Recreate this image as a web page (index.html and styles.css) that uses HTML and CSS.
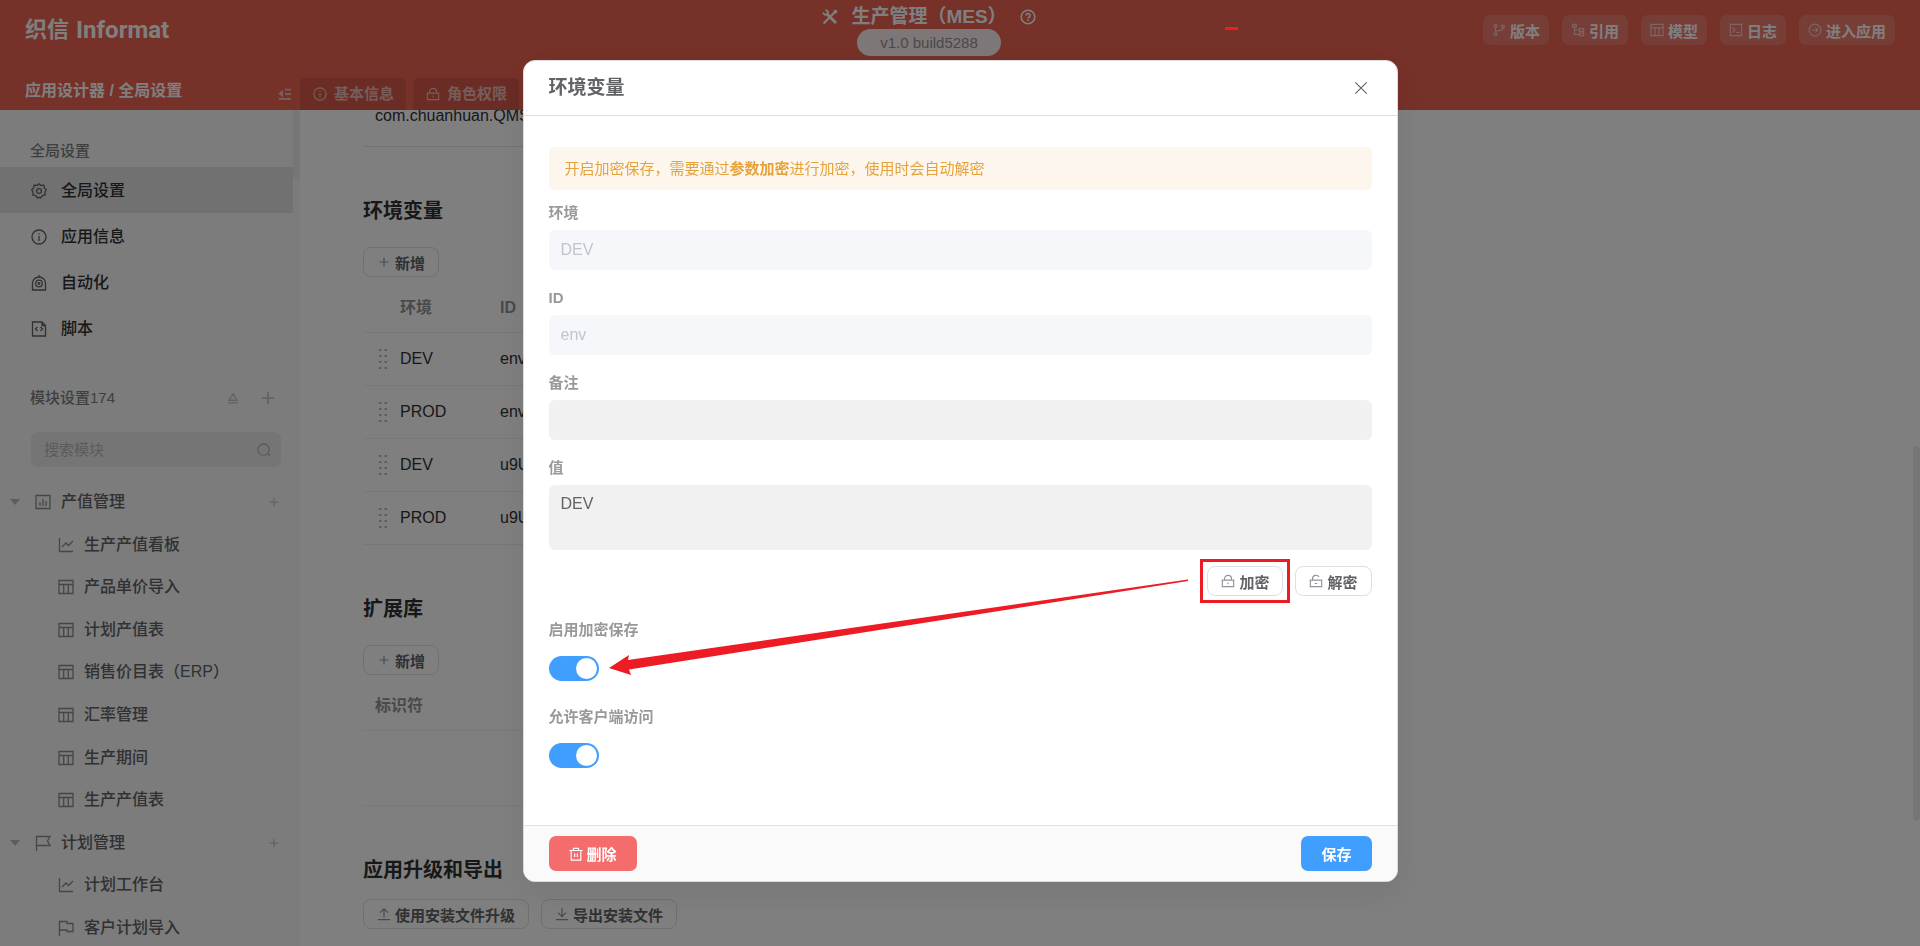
FILE: index.html
```html
<!DOCTYPE html>
<html lang="zh-CN">
<head>
  <meta charset="UTF-8">
  <meta name="viewport" content="width=device-width, initial-scale=1.0">
  <title>应用设计器</title>
  <link rel="stylesheet" href="styles.css">
</head>
<body>
  <!-- Icon set -->
  <svg class="icon-defs" aria-hidden="true">
    <symbol id="i-tools" viewBox="0 0 16 16"><path d="M4.500 4.500L14 14" stroke-width="2.800"/><path d="M11 5l-9.500 9.500M12 1.500l2.500 2.500M14.800 1.200L10.500 5.500" stroke-width="2.200"/><path d="M.8 3.500L3 5.800l2.600-.4L6 2.800 3.800.6" stroke-width="1.800"/></symbol>
    <symbol id="i-help" viewBox="0 0 16 16"><circle cx="8" cy="8" r="6.800" stroke-width="1.600"/><path d="M6 6.500a2 2 0 1 1 2.800 1.900c-.6.300-.8.600-.8 1.200" stroke-width="1.600"/><path d="M8 10.600v1.400" stroke-width="1.600"/></symbol>
    <symbol id="i-branch" viewBox="0 0 16 16"><circle cx="4" cy="3.500" r="1.600"/><circle cx="4" cy="12.500" r="1.600"/><circle cx="12.500" cy="4" r="1.600"/><path d="M4 5.200v5.600M12.500 5.700c0 3-3 3.300-8.500 3.300"/></symbol>
    <symbol id="i-tree" viewBox="0 0 16 16"><path d="M2 1.500h4v3H2zM9.500 6.500h5v3h-5zM9.500 11.500h5v3h-5zM4 4.500V13h5.500M4 8h5.500"/></symbol>
    <symbol id="i-table" viewBox="0 0 16 16"><path d="M1 1.500h14v13H1zM1 5.500h14M5.700 5.500v9M10.300 5.500v9"/></symbol>
    <symbol id="i-console" viewBox="0 0 16 16"><path d="M1.500 1.500h13v13h-13zM4 5l3 3-3 3M8.500 11h3.500"/></symbol>
    <symbol id="i-enter" viewBox="0 0 16 16"><circle cx="8" cy="8" r="6.700"/><path d="M4.500 8h6.500M8.500 5.300L11.200 8l-2.700 2.700"/></symbol>
    <symbol id="i-fold" viewBox="0 0 16 16"><path d="M8 3h7M8 8h7M1 13.500h14" stroke-width="2"/><path d="M5 4.500L1.500 7.500 5 10.500z" fill="currentColor"/></symbol>
    <symbol id="i-info" viewBox="0 0 16 16"><circle cx="8" cy="8" r="7"/><path d="M8 7v5M8 4.200v1.400"/></symbol>
    <symbol id="i-lock" viewBox="0 0 16 16"><path d="M1.500 7h13v7.500h-13zM4 7V5.500a4 4 0 0 1 8 0V7M8 9.800v2"/></symbol>
    <symbol id="i-unlock" viewBox="0 0 16 16"><path d="M1.500 7h13v7.500h-13zM4 7V5.500a4 4 0 0 1 7.500-2M6.500 10.800h3"/></symbol>
    <symbol id="i-gear" viewBox="0 0 16 16"><path d="M8 .8l2 1.700 2.800-.3.500 2.700 2 1.900L14 9.200l.1 2.800-2.700.5L9.600 15 8 14.300 6.400 15l-1.800-2.500-2.700-.5L2 9.200.7 6.800l2-1.900.5-2.700 2.800.3z"/><circle cx="8" cy="8" r="2.400"/></symbol>
    <symbol id="i-robot" viewBox="0 0 16 16"><path d="M1.500 15V8a6.500 6 0 0 1 13 0v7zM8 2V0"/><circle cx="8" cy="8.500" r="3.300"/><circle cx="8" cy="8.500" r=".8"/></symbol>
    <symbol id="i-script" viewBox="0 0 16 16"><path d="M1.500 1H11l3.500 3.500V15h-13zM11 1v3.500h3.500M6.500 6L4.500 8l2 2M9.500 6l2 2-2 2"/></symbol>
    <symbol id="i-collapse" viewBox="0 0 16 16"><path d="M8 2.500L13.500 11h-11zM1.500 14.500h13" stroke-width="1.800"/></symbol>
    <symbol id="i-plus" viewBox="0 0 16 16"><path d="M8 1v14M1 8h14" stroke-width="2"/></symbol>
    <symbol id="i-add" viewBox="0 0 16 16"><path d="M8 3v10M3 8h10"/></symbol>
    <symbol id="i-search" viewBox="0 0 16 16"><circle cx="7.500" cy="7.500" r="6.500"/><path d="M12 12l3 3"/></symbol>
    <symbol id="i-bars" viewBox="0 0 16 16"><path d="M1 1.500h14v13H1zM5 8v4M8 5v7M11 7v5"/></symbol>
    <symbol id="i-line" viewBox="0 0 16 16"><path d="M1.500 1v13.500H15M4 10l4-4 2.500 2.500L15 4"/></symbol>
    <symbol id="i-flag" viewBox="0 0 16 16"><path d="M1.500 16V1.500h13.500L12.500 6l2.500 4.500H1.500"/></symbol>
    <symbol id="i-flag2" viewBox="0 0 16 16"><path d="M1.500 16V1.500h7.500v2h6v8H9v-1.500H1.500"/></symbol>
    <symbol id="i-upload" viewBox="0 0 16 16"><path d="M8 12V2M3.500 6.500L8 2l4.500 4.500M1 14.500h14"/></symbol>
    <symbol id="i-download" viewBox="0 0 16 16"><path d="M8 1v10M3.500 6.500L8 11l4.500-4.500M1 14.500h14"/></symbol>
    <symbol id="i-trash" viewBox="0 0 16 16"><path d="M.5 4h15M2.500 4v11h11V4M5 4V1.500h6V4M6.500 7.500v4M9.500 7.500v4"/></symbol>
    <symbol id="i-close" viewBox="0 0 16 16"><path d="M1.500 1.500l13 13M14.500 1.500l-13 13"/></symbol>
    <symbol id="i-drag" viewBox="0 0 10 22"><path d="M1 2h2.500M6.500 2H9M1 8h2.500M6.500 8H9M1 14h2.500M6.500 14H9M1 20h2.500M6.500 20H9" stroke-width="2"/></symbol>
  </svg>

  <div class="app">
    <header class="header">
      <div class="header-top">
        <a class="logo" href="#"><span class="logo-cn">织信</span><span class="logo-en">Informat</span></a>
        <div class="app-title">
          <div class="app-name">
            <svg class="icon icon-16"><use href="#i-tools"/></svg>
            <h1>生产管理（MES）</h1>
            <svg class="icon icon-16"><use href="#i-help"/></svg>
          </div>
          <span class="version">v1.0 build5288</span>
        </div>
        <div class="header-actions">
          <button class="header-btn"><svg class="icon"><use href="#i-branch"/></svg>版本</button>
          <button class="header-btn"><svg class="icon"><use href="#i-tree"/></svg>引用</button>
          <button class="header-btn"><svg class="icon"><use href="#i-table"/></svg>模型</button>
          <button class="header-btn"><svg class="icon"><use href="#i-console"/></svg>日志</button>
          <button class="header-btn"><svg class="icon"><use href="#i-enter"/></svg>进入应用</button>
        </div>
      </div>
      <div class="header-sub">
        <div class="crumbs">
          <span>应用设计器 / 全局设置</span>
          <button class="plain-btn" aria-label="收起"><svg class="icon"><use href="#i-fold"/></svg></button>
        </div>
        <nav class="tabs">
          <a class="tab" href="#"><svg class="icon"><use href="#i-info"/></svg>基本信息</a>
          <a class="tab" href="#"><svg class="icon"><use href="#i-lock"/></svg>角色权限</a>
        </nav>
      </div>
    </header>

    <div class="content">
      <!-- Sidebar -->
      <aside class="sidebar">
        <div class="group-title">全局设置</div>
        <nav class="menu">
          <a class="menu-item active" href="#"><svg class="icon icon-16"><use href="#i-gear"/></svg>全局设置</a>
          <a class="menu-item" href="#"><svg class="icon icon-16"><use href="#i-info"/></svg>应用信息</a>
          <a class="menu-item" href="#"><svg class="icon icon-16"><use href="#i-robot"/></svg>自动化</a>
          <a class="menu-item" href="#"><svg class="icon icon-16"><use href="#i-script"/></svg>脚本</a>
        </nav>
        <div class="group-title modules-title">
          <span>模块设置174</span>
          <button class="plain-btn" aria-label="折叠"><svg class="icon icon-12"><use href="#i-collapse"/></svg></button>
          <button class="plain-btn" aria-label="新增模块"><svg class="icon"><use href="#i-plus"/></svg></button>
        </div>
        <div class="search">
          <input type="text" placeholder="搜索模块" aria-label="搜索模块">
          <svg class="icon"><use href="#i-search"/></svg>
        </div>
        <ul class="tree">
          <li class="tree-group"><span class="caret"></span><svg class="icon icon-16"><use href="#i-bars"/></svg><a href="#">产值管理</a><button class="plain-btn" aria-label="新增"><svg class="icon icon-10"><use href="#i-plus"/></svg></button></li>
          <li class="tree-item"><svg class="icon icon-16"><use href="#i-line"/></svg><a href="#">生产产值看板</a></li>
          <li class="tree-item"><svg class="icon icon-16"><use href="#i-table"/></svg><a href="#">产品单价导入</a></li>
          <li class="tree-item"><svg class="icon icon-16"><use href="#i-table"/></svg><a href="#">计划产值表</a></li>
          <li class="tree-item"><svg class="icon icon-16"><use href="#i-table"/></svg><a href="#">销售价目表（ERP）</a></li>
          <li class="tree-item"><svg class="icon icon-16"><use href="#i-table"/></svg><a href="#">汇率管理</a></li>
          <li class="tree-item"><svg class="icon icon-16"><use href="#i-table"/></svg><a href="#">生产期间</a></li>
          <li class="tree-item"><svg class="icon icon-16"><use href="#i-table"/></svg><a href="#">生产产值表</a></li>
          <li class="tree-group"><span class="caret"></span><svg class="icon icon-16"><use href="#i-flag"/></svg><a href="#">计划管理</a><button class="plain-btn" aria-label="新增"><svg class="icon icon-10"><use href="#i-plus"/></svg></button></li>
          <li class="tree-item"><svg class="icon icon-16"><use href="#i-line"/></svg><a href="#">计划工作台</a></li>
          <li class="tree-item"><svg class="icon icon-16"><use href="#i-flag2"/></svg><a href="#">客户计划导入</a></li>
        </ul>
        <div class="side-thumb"></div>
      </aside>

      <!-- Settings page -->
      <main class="main">
        <div class="settings">
          <div class="package">com.chuanhuan.QMS</div>

          <section>
            <h2>环境变量</h2>
            <button class="btn"><svg class="icon"><use href="#i-add"/></svg>新增</button>
            <table class="table">
              <thead>
                <tr><th class="col-drag"></th><th class="col-env">环境</th><th>ID</th></tr>
              </thead>
              <tbody>
                <tr><td class="col-drag"><svg class="drag"><use href="#i-drag"/></svg></td><td>DEV</td><td>env</td></tr>
                <tr><td class="col-drag"><svg class="drag"><use href="#i-drag"/></svg></td><td>PROD</td><td>env</td></tr>
                <tr><td class="col-drag"><svg class="drag"><use href="#i-drag"/></svg></td><td>DEV</td><td>u9U</td></tr>
                <tr><td class="col-drag"><svg class="drag"><use href="#i-drag"/></svg></td><td>PROD</td><td>u9U</td></tr>
              </tbody>
            </table>
          </section>

          <section>
            <h2>扩展库</h2>
            <button class="btn"><svg class="icon"><use href="#i-add"/></svg>新增</button>
            <table class="table">
              <thead>
                <tr><th class="col-key">标识符</th></tr>
              </thead>
              <tbody>
                <tr class="empty"><td></td></tr>
              </tbody>
            </table>
          </section>

          <section class="export">
            <h2>应用升级和导出</h2>
            <div class="btn-row">
              <button class="btn"><svg class="icon"><use href="#i-upload"/></svg>使用安装文件升级</button>
              <button class="btn"><svg class="icon"><use href="#i-download"/></svg>导出安装文件</button>
            </div>
          </section>
        </div>
        <div class="main-thumb"></div>
      </main>
    </div>
  </div>

  <!-- Variable dialog -->
  <div class="overlay">
    <div class="dialog" role="dialog" aria-labelledby="dialog-title">
      <div class="dialog-header">
        <h3 id="dialog-title">环境变量</h3>
        <button class="plain-btn" aria-label="关闭"><svg class="icon"><use href="#i-close"/></svg></button>
      </div>
      <form class="dialog-body" id="env-form">
        <div class="alert">开启加密保存，需要通过<b>参数加密</b>进行加密，使用时会自动解密</div>
        <div class="field">
          <label for="env">环境</label>
          <input type="text" id="env" value="DEV" disabled>
        </div>
        <div class="field">
          <label for="env-id">ID</label>
          <input type="text" id="env-id" value="env" disabled>
        </div>
        <div class="field">
          <label for="remark">备注</label>
          <input type="text" id="remark">
        </div>
        <div class="field">
          <label for="value">值</label>
          <textarea id="value">DEV</textarea>
        </div>
        <div class="crypt-row">
          <div class="marked"><button type="button" class="btn"><svg class="icon"><use href="#i-lock"/></svg>加密</button></div>
          <button type="button" class="btn"><svg class="icon"><use href="#i-unlock"/></svg>解密</button>
        </div>
        <div class="switch-field">
          <label for="encrypt">启用加密保存</label>
          <input type="checkbox" class="switch" id="encrypt" checked>
        </div>
        <div class="switch-field">
          <label for="client">允许客户端访问</label>
          <input type="checkbox" class="switch" id="client" checked>
        </div>
        <svg class="arrow" viewBox="0 0 580 97"><path d="M0 89L20 76 19 81 579 0.500V2L20 90.500 22 96z"/></svg>
      </form>
      <div class="dialog-footer">
        <button class="action-btn danger"><svg class="icon"><use href="#i-trash"/></svg>删除</button>
        <button class="action-btn primary" form="env-form">保存</button>
      </div>
    </div>
    <div class="dash"></div>
  </div>
</body>
</html>
```
FILE: styles.css
```css
* {
  box-sizing: border-box;
}
body {
  margin: 0;
  font-family: "Liberation Sans", "Noto Sans CJK SC", sans-serif;
  font-size: 16px;
  line-height: 24px;
  color: #303133;
}
h1, h2, h3, ul {
  margin: 0;
  padding: 0;
}
a {
  color: inherit;
  text-decoration: none;
}
button, input, textarea {
  font-family: inherit;
}
button {
  cursor: pointer;
}
.icon-defs {
  position: absolute;
  width: 0;
  height: 0;
}
.icon {
  width: 14px;
  height: 14px;
  flex: none;
  fill: none;
  stroke: currentColor;
  stroke-width: 1.3;
}
.icon-16 {
  width: 16px;
  height: 16px;
}
.icon-12 {
  width: 12px;
  height: 12px;
}
.icon-10 {
  width: 10px;
  height: 10px;
}
.plain-btn {
  display: flex;
  padding: 0;
  border: none;
  background: none;
  color: inherit;
}
.app {
  display: flex;
  flex-direction: column;
  height: 100vh;
  overflow: hidden;
}

/* Header */
.header {
  flex: none;
  background-color: #ec6252;
  color: #fff;
}
.header-top {
  display: grid;
  grid-template-columns: 1fr auto 1fr;
  height: 60px;
  padding: 0 25px;
}
.logo {
  display: flex;
  align-items: center;
  gap: 7px;
  height: 60px;
  font-weight: bold;
}
.logo-cn {
  font-size: 22px;
}
.logo-en {
  font-family: Roboto, "Liberation Sans", sans-serif;
  font-size: 24px;
}
.app-title {
  display: flex;
  flex-direction: column;
  align-items: center;
  padding: 4px 62px 0 0;
}
.app-name {
  display: flex;
  align-items: center;
  gap: 13px;
  height: 25px;
}
.app-name h1 {
  font-size: 19px;
}
.version {
  height: 27px;
  padding: 0 23px;
  border-radius: 14px;
  background-color: rgba(255, 255, 255, 0.9);
  color: #909399;
  font-size: 15px;
  line-height: 27px;
}
.header-actions {
  display: flex;
  justify-content: flex-end;
  gap: 13px;
  padding-top: 15px;
}
.header-btn {
  display: flex;
  align-items: center;
  gap: 4px;
  height: 30px;
  padding: 0 9px;
  border: none;
  border-radius: 7px;
  background-color: rgba(255, 255, 255, 0.17);
  color: #fff;
  font-size: 15px;
  font-weight: bold;
}
.header-btn .icon {
  opacity: 0.6;
}
.header-sub {
  display: flex;
  height: 50px;
}
.crumbs {
  display: flex;
  align-items: center;
  justify-content: space-between;
  width: 300px;
  padding: 12px 8px 0 25px;
  font-weight: bold;
}
.crumbs .plain-btn {
  padding-top: 6px;
  opacity: 0.6;
}
.tabs {
  display: flex;
  align-items: flex-end;
  gap: 7px;
}
.tab {
  display: flex;
  align-items: center;
  gap: 7px;
  height: 32px;
  padding: 0 12px 0 13px;
  border-radius: 5px 5px 0 0;
  background-color: rgba(0, 0, 0, 0.1);
  color: rgba(255, 255, 255, 0.6);
  font-size: 15px;
  font-weight: bold;
}

/* Sidebar */
.content {
  display: flex;
  flex: 1;
  min-height: 0;
}
.sidebar {
  position: relative;
  flex: none;
  width: 300px;
  overflow: hidden;
  background-color: #f8f8f8;
}
.group-title {
  padding: 29px 30px 4px;
  color: #7e7e80;
  font-size: 15px;
  font-weight: 500;
}
.menu-item {
  display: flex;
  align-items: center;
  gap: 14px;
  height: 46px;
  margin-right: 7px;
  padding: 1px 0 0 31px;
  font-weight: 500;
}
.menu-item .icon {
  color: #606266;
}
.menu-item.active {
  background-color: #e3e3e3;
}
.modules-title {
  display: flex;
  align-items: center;
  gap: 22px;
  padding: 35px 25px 22px 30px;
}
.modules-title span {
  flex: 1;
}
.modules-title .plain-btn {
  color: #c0c4cc;
}
.search {
  display: flex;
  align-items: center;
  height: 35px;
  margin: 0 19px 14px 31px;
  padding: 0 10px 0 13px;
  border-radius: 7px;
  background-color: #ebebeb;
  color: #a8abb2;
}
.search input {
  flex: 1;
  min-width: 0;
  padding: 0;
  border: none;
  outline: none;
  background: none;
  font-size: 15px;
}
.search input::placeholder {
  color: #b4b7bd;
}
.tree {
  display: grid;
  grid-auto-rows: 1fr;
  height: 468px;
  list-style: none;
  color: #606266;
  font-weight: 500;
}
.tree-group, .tree-item {
  display: flex;
  align-items: center;
}
.tree-group {
  padding: 0 21px 0 10px;
}
.tree-group .icon-16 {
  margin: 0 10px 0 15px;
}
.tree-group a {
  flex: 1;
}
.tree-group .plain-btn {
  color: #c0c4cc;
}
.tree-item {
  gap: 10px;
  padding-left: 58px;
}
.tree .icon-16 {
  color: #8a8c90;
}
.caret {
  border: 5px solid transparent;
  border-top: 6px solid #b8babf;
  border-bottom: none;
}
.side-thumb, .main-thumb {
  position: absolute;
  right: 0;
  width: 7px;
  border-radius: 4px;
}
.side-thumb {
  top: 0;
  height: 69px;
  background-color: #ececec;
}

/* Settings page */
.main {
  position: relative;
  flex: 1;
  overflow: hidden;
}
.main-thumb {
  top: 336px;
  height: 375px;
  background-color: #ececef;
}
.settings {
  max-width: 1080px;
  margin-top: -6px;
  padding: 0 63px;
}
.package {
  padding: 0 12px 18px;
  border-bottom: 1px solid #e4e7ed;
}
section {
  padding-top: 49px;
}
h2 {
  margin-bottom: 21px;
  font-size: 20px;
  line-height: 30px;
}
.btn {
  display: flex;
  align-items: center;
  gap: 4px;
  height: 30px;
  padding: 0 13px;
  border: 1px solid #dcdfe6;
  border-radius: 8px;
  background: none;
  color: #606266;
  font-size: 15px;
  font-weight: bold;
}
.btn .icon {
  color: #909399;
}
.btn-row {
  display: flex;
  gap: 12px;
}
.export h2 {
  margin-bottom: 14px;
}
.table {
  width: 100%;
  margin-top: 3px;
  border-spacing: 0;
  table-layout: fixed;
}
.table th, .table td {
  height: 53px;
  padding: 0;
  border-bottom: 1px solid #ebeef5;
  text-align: left;
}
.table th {
  padding-top: 4px;
  color: #909399;
}
.table .col-drag {
  width: 37px;
  padding-left: 15px;
}
.table .col-env {
  width: 100px;
}
.table .col-key {
  padding-left: 12px;
}
.table .empty td {
  height: 75px;
}
.drag {
  display: block;
  width: 10px;
  height: 22px;
  stroke: #b8babf;
}

/* Dialog */
.overlay {
  position: fixed;
  inset: 0;
  padding-top: 60px;
  background-color: rgba(0, 0, 0, 0.5);
}
.dialog {
  width: 92%;
  max-width: 875px;
  margin: 0 auto;
  overflow: hidden;
  border: 1px solid #dcdcdc;
  border-radius: 12px;
  background-color: #fff;
  box-shadow: 0 12px 32px 4px rgba(0, 0, 50, 0.06);
}
.dialog-header {
  display: flex;
  align-items: center;
  justify-content: space-between;
  height: 55px;
  padding: 0 29px 0 25px;
  border-bottom: 1px solid #e0e0e0;
  color: #606266;
}
.dialog-header h3 {
  font-size: 19px;
}
.dialog-body {
  position: relative;
  padding: 31px 25px 57px;
}
.alert {
  padding: 10px 16px;
  border-radius: 5px;
  background-color: #fdf6ec;
  color: #e6a23c;
  font-size: 15px;
  line-height: 23px;
}
.field {
  display: flex;
  flex-direction: column;
  gap: 6px;
  margin-top: 16px;
}
.alert + .field {
  margin-top: 11px;
}
.field label, .switch-field label {
  color: #999;
  font-size: 15px;
  font-weight: bold;
  line-height: 23px;
}
.field input, .field textarea {
  display: block;
  width: 100%;
  height: 40px;
  padding: 0 12px;
  border: none;
  border-radius: 6px;
  outline: none;
  background-color: #f1f1f1;
  color: #606266;
  font-size: 16px;
}
.field textarea {
  height: 65px;
  padding: 7px 12px;
  line-height: 24px;
  resize: none;
}
.field input:disabled {
  background-color: #f5f7fa;
  color: #c0c4cc;
}
.crypt-row {
  display: flex;
  justify-content: flex-end;
  gap: 12px;
  margin-top: 16px;
}
.marked {
  position: relative;
}
.marked::after {
  content: "";
  position: absolute;
  inset: -7px;
  border: 3px solid #ed1c24;
  pointer-events: none;
}
.switch-field {
  display: flex;
  flex-direction: column;
  align-items: flex-start;
  gap: 15px;
  margin-top: 24px;
}
.crypt-row + .switch-field {
  margin-top: 22px;
}
.switch {
  display: flex;
  justify-content: flex-end;
  width: 50px;
  height: 25px;
  margin: 0;
  padding: 2px;
  border-radius: 13px;
  appearance: none;
  background-color: #409eff;
}
.switch::before {
  content: "";
  width: 21px;
  height: 21px;
  border-radius: 50%;
  background-color: #fff;
}
.switch:not(:checked) {
  justify-content: flex-start;
  background-color: #dcdfe6;
}
.arrow {
  position: absolute;
  top: 463px;
  left: 85px;
  width: 580px;
  height: 97px;
  fill: #ed1c24;
  pointer-events: none;
}
.dialog-footer {
  display: flex;
  align-items: center;
  justify-content: space-between;
  height: 56px;
  padding: 0 25px;
  border-top: 1px solid #e0e0e0;
  background-color: #fafafa;
}
.action-btn {
  display: flex;
  align-items: center;
  gap: 4px;
  height: 35px;
  padding: 0 20px;
  border: none;
  border-radius: 7px;
  color: #fff;
  font-size: 15px;
  font-weight: bold;
}
.danger {
  background-color: #f56c6c;
}
.primary {
  background-color: #409eff;
}
.dash {
  position: absolute;
  top: 27px;
  left: 1225px;
  width: 13px;
  height: 3px;
  background-color: #ed1c24;
}
```
